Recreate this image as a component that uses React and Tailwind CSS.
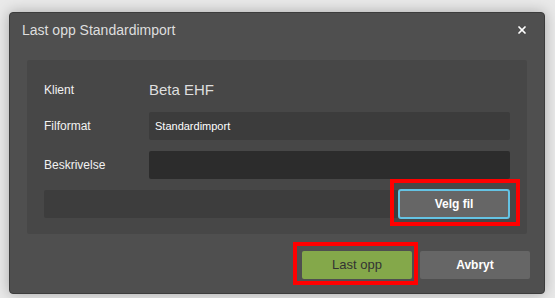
import React from 'react';
import { X } from 'lucide-react';

function Field({ label, children, className = '' }) {
  return (
    <div className={`flex items-center h-[28px] ${className}`}>
      <div className="w-[105px] shrink-0 text-[12px] text-[#f2f2f2]">{label}</div>
      {children}
    </div>
  );
}

export default function App() {
  return (
    <div
      className="w-[555px] h-[298px] bg-[#e9e9e9] pt-[12px] pl-[9px] overflow-hidden"
      style={{ fontFamily: '"Liberation Sans", Arial, sans-serif' }}
    >
      <div className="w-[536px] h-[282px] bg-[#4f4f4f] rounded-[4px] border border-[#3c3c3c] shadow-[0_0_14px_rgba(0,0,0,0.28)] flex flex-col">
        {/* header */}
        <div className="h-[36px] mt-[-1px] flex items-center justify-between pl-[12px] pr-[16px]">
          <span className="text-[14px] text-[#dedede]">Last opp Standardimport</span>
          <X size={12} strokeWidth={3.5} className="text-white" />
        </div>

        {/* body */}
        <div className="mt-[12px] ml-[17px] w-[500px] bg-[#474747] rounded-[2px] pt-[16px] pb-[16px] pl-[17px] pr-[17px]">
          <Field label="Klient">
            <span className="text-[15px] text-[#dedede]">Beta EHF</span>
          </Field>
          <Field label="Filformat" className="mt-[8px]">
            <div className="flex-1 h-[28px] bg-[#3c3c3c] rounded-[2px] flex items-center pl-[6px] text-[11px] text-white">
              Standardimport
            </div>
          </Field>
          <Field label="Beskrivelse" className="mt-[11px]">
            <div className="flex-1 h-[28px] bg-[#2c2c2c] rounded-[2px]" />
          </Field>
          <div className="mt-[11px] h-[28px] flex items-center">
            <div className="flex-1 h-[28px] bg-[#3d3d3d] rounded-l-[2px]" />
            <div className="relative">
              <button className="w-[112px] h-[30px] bg-[#666666] border-2 border-[#64c3e4] rounded-[3px] text-[12px] font-bold text-white">
                Velg fil
              </button>
              <div className="absolute left-[-8px] right-[-10px] top-[-10px] bottom-[-7px] border-[4px] border-[#ff0000] pointer-events-none" />
            </div>
          </div>
        </div>

        {/* footer */}
        <div className="mt-[17px] flex justify-end gap-[8px] pr-[14px]">
          <div className="relative">
            <button className="w-[110px] h-[28px] bg-[#84a84a] rounded-[2px] text-[13px] text-[#333333]">
              Last opp
            </button>
            <div className="absolute left-[-9px] right-[-6px] top-[-9px] bottom-[-6px] border-[4px] border-[#ff0000] pointer-events-none" />
          </div>
          <button className="w-[110px] h-[28px] bg-[#666666] rounded-[2px] text-[12px] font-bold text-white">
            Avbryt
          </button>
        </div>
      </div>
    </div>
  );
}
